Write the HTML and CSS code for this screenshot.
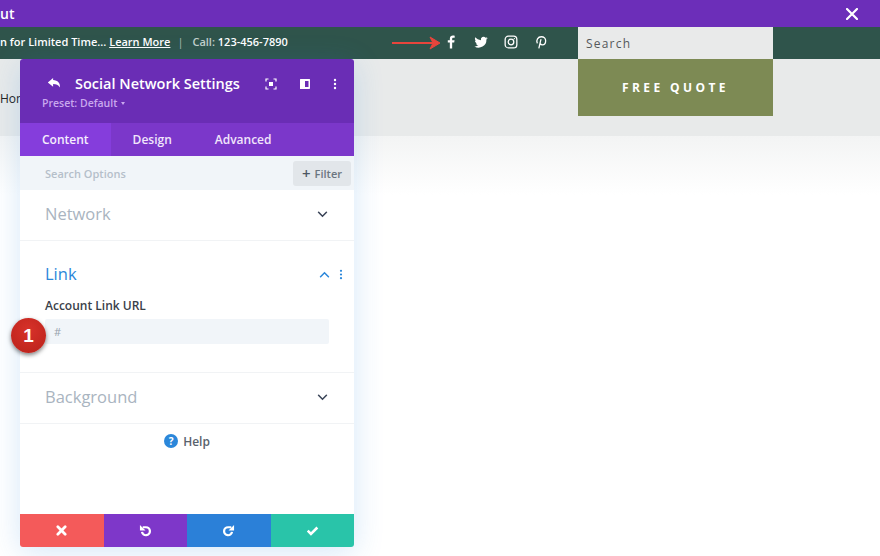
FILE: index.html
```html
<!DOCTYPE html>
<html lang="en">
<head>
<meta charset="utf-8">
<title>Social Network Settings</title>
<link rel="stylesheet" href="styles.css">
</head>
<body>
<div class="page">
  <div class="topbar"><span class="topbar-title">ut</span>
    <svg class="close" viewBox="0 0 12 12" width="12" height="12"><path d="M1 1l10 10M11 1L1 11" stroke="#fff" stroke-width="2.2" stroke-linecap="round"/></svg>
  </div>
  <div class="greenbar">
    <div class="promo">n for Limited Time... <u>Learn More</u><span class="sep">|</span><span class="call">Call:</span> 123-456-7890</div>
    <div class="arrow-wrap"><svg width="50" height="14" viewBox="0 0 50 14"><path d="M0 7H44" stroke="#e8453c" stroke-width="2"/><path d="M38 1l10 6-10 6 3-6z" fill="#e8453c" stroke="#e8453c" stroke-width="1"/></svg></div>
    <div class="socials">
      <svg viewBox="0 0 24 24" width="14" height="14"><path fill="#fff" d="M14 23V13h3.5l.6-4H14V6.800c0-1.200.5-2 2.100-2H18.300V1.200C17.800 1.100 16.600 1 15.300 1 12.200 1 10 2.900 10 6.300V9H6.500v4H10v10z"/></svg>
      <svg viewBox="0 0 24 24" width="14" height="14"><path fill="#fff" d="M23.500 5.200c-.8.400-1.700.6-2.700.8 1-.6 1.700-1.500 2.100-2.600-.9.500-1.900.9-3 1.100A4.700 4.700 0 0 0 11.900 8.800C8 8.600 4.500 6.700 2.200 3.900c-1.300 2.200-.6 4.900 1.500 6.300-.8 0-1.500-.2-2.100-.6 0 2.300 1.600 4.200 3.800 4.700-.7.200-1.400.2-2.100.1.600 1.900 2.300 3.200 4.400 3.300A9.500 9.500 0 0 1 .7 19.600 13.400 13.400 0 0 0 21.300 7.700c1-.7 1.700-1.500 2.200-2.500z"/></svg>
      <svg viewBox="0 0 24 24" width="14" height="14" fill="none" stroke="#fff" stroke-width="2.200"><rect x="2" y="2" width="20" height="20" rx="5.500"/><circle cx="12" cy="12" r="4.800"/><circle cx="17.800" cy="6.200" r="1.200" fill="#fff" stroke="none"/></svg>
      <svg viewBox="0 0 24 24" width="14" height="14"><path fill="none" stroke="#fff" stroke-width="2.200" stroke-linecap="round" d="M5.500 13.500C3.500 9 6.500 3 12.500 3c5 0 7.500 3.400 7.500 7 0 4.200-2.500 7-5.500 7-2 0-3-1.200-3.300-2M11.800 8l-3.300 14"/></svg>
    </div>
    <div class="searchbox">Search</div>
  </div>
  <div class="headerband">
    <div class="menu">Hom</div>
    <div class="quote">FREE QUOTE</div>
  </div>
  <div class="fade"></div>

  <section class="panel">
    <header class="panel-head">
      <div class="head-row">
        <svg class="back" viewBox="0 0 16 14" width="15" height="13"><path fill="#fff" d="M6.500 1L.8 5.800l5.700 4.700V7.600c3.400 0 5.600.7 7.300 3.600.6-4.700-2.300-7.700-7.300-8z"/></svg>
        <h1>Social Network Settings</h1>
        <svg class="hicon" viewBox="0 0 12 12" width="12" height="12"><path fill="none" stroke="#fff" stroke-width="1.200" d="M1 3.500V1h2.500M8.500 1H11v2.500M11 8.500V11H8.500M3.500 11H1V8.500"/><rect x="4" y="4" width="4" height="4" fill="#fff"/></svg>
        <svg class="hicon split" viewBox="0 0 12 12" width="12" height="12"><path fill="#fff" fill-rule="evenodd" d="M1.500 1h9A.8.800 0 0 1 11 1.800v8.400a.8.800 0 0 1-.8.800h-9A.8.800 0 0 1 1 10.200V1.800A.8.800 0 0 1 1.500 1zM6 3v6h3.500V3z"/></svg>
        <svg class="hicon dots" viewBox="0 0 4 12" width="4" height="12"><circle cx="2" cy="2" r="1.200" fill="#fff"/><circle cx="2" cy="6" r="1.200" fill="#fff"/><circle cx="2" cy="10" r="1.200" fill="#fff"/></svg>
      </div>
      <div class="preset">Preset: Default <span class="caret"></span></div>
    </header>
    <nav class="tabs">
      <div class="tab active">Content</div>
      <div class="tab">Design</div>
      <div class="tab">Advanced</div>
    </nav>
    <div class="searchrow">
      <span class="search-ph">Search Options</span>
      <div class="filter"><span class="plus">+</span> Filter</div>
    </div>
    <div class="group closed">
      <span class="group-title">Network</span>
      <svg class="chev" viewBox="0 0 12 8" width="11" height="7"><path d="M1.500 1.500L6 6l4.500-4.500" fill="none" stroke="#3b4558" stroke-width="1.800" stroke-linecap="round"/></svg>
    </div>
    <div class="group open">
      <div class="open-head">
        <span class="group-title link">Link</span>
        <svg class="chev up" viewBox="0 0 12 8" width="11" height="7"><path d="M1.500 6.500L6 2l4.500 4.500" fill="none" stroke="#2b87da" stroke-width="1.800" stroke-linecap="round"/></svg>
        <svg class="more" viewBox="0 0 4 12" width="4" height="11"><circle cx="2" cy="2" r="1.200" fill="#2b87da"/><circle cx="2" cy="6" r="1.200" fill="#2b87da"/><circle cx="2" cy="10" r="1.200" fill="#2b87da"/></svg>
      </div>
      <label class="field-label">Account Link URL</label>
      <div class="field">#</div>
    </div>
    <div class="group closed">
      <span class="group-title">Background</span>
      <svg class="chev" viewBox="0 0 12 8" width="11" height="7"><path d="M1.500 1.500L6 6l4.500-4.500" fill="none" stroke="#3b4558" stroke-width="1.800" stroke-linecap="round"/></svg>
    </div>
    <div class="help">
      <span class="help-icon">?</span>
      <span>Help</span>
    </div>
    <footer class="actions">
      <div class="act red"><svg viewBox="0 0 12 12" width="11" height="11"><path d="M2 2l8 8M10 2l-8 8" stroke="#fff" stroke-width="3" stroke-linecap="round"/></svg></div>
      <div class="act purple"><svg viewBox="0 0 14 14" width="13" height="13"><path fill="none" stroke="#fff" stroke-width="2.400" d="M4 3.500h3.500a4.300 4.300 0 1 1-4.300 5"/><path fill="#fff" d="M1 1v6h6z"/></svg></div>
      <div class="act blue"><svg viewBox="0 0 14 14" width="13" height="13"><path fill="none" stroke="#fff" stroke-width="2.400" d="M10 3.500H6.500a4.300 4.300 0 1 0 4.300 5"/><path fill="#fff" d="M13 1v6H7z"/></svg></div>
      <div class="act green"><svg viewBox="0 0 14 12" width="13" height="11"><path d="M1.800 6.200l3.500 3.500 7-7" fill="none" stroke="#fff" stroke-width="2.800"/></svg></div>
    </footer>
  </section>

  <div class="badge">1</div>
</div>
</body>
</html>
```

FILE: styles.css
```css
* { box-sizing: border-box; }
html, body { margin: 0; padding: 0; }
body { width: 880px; height: 556px; overflow: hidden; background: #fff; font-family: "Open Sans", "Noto Sans", sans-serif; }
.page { position: relative; width: 880px; height: 556px; overflow: hidden; }

.topbar { height: 27px; background: #6c2eb9; display: flex; align-items: center; justify-content: space-between; padding-right: 22px; }
.topbar-title { color: #fff; font-size: 14px; font-weight: 600; }
.close { display: block; }

.greenbar { height: 32px; background: #2f544b; display: flex; align-items: center; position: relative; }
.promo { width: 392px; color: #fff; font-size: 11px; font-weight: 600; white-space: nowrap; padding-bottom: 4px; flex: none; }
.sep { color: #a9bab5; margin: 0 9px 0 7px; font-weight: 400; }
.call { color: #c3d0cc; }
.arrow-wrap { width: 50px; flex: none; display: flex; }
.socials { display: flex; gap: 16px; align-items: center; flex: none; width: 136px; padding-left: 2px; padding-bottom: 2px; }
.searchbox { width: 195px; height: 32px; background: #e9eaea; color: #55585a; font-size: 12px; letter-spacing: 1.2px; padding: 9px 8px 0; line-height: 16px; flex: none; }

.headerband { height: 77px; background: #e8eaea; display: flex; position: relative; }
.menu { width: 578px; flex: none; color: #222; font-size: 12px; padding-top: 31px; }
.quote { width: 195px; height: 57px; background: #7d8a54; color: #fff; font-size: 12px; font-weight: 700; letter-spacing: 3.400px; display: flex; align-items: center; justify-content: center; }
.fade { height: 59px; background: linear-gradient(#f3f4f4, #fff); }

.panel { position: absolute; left: 20px; top: 59px; width: 334px; height: 488px; background: #fff; border-radius: 3px; box-shadow: 0 5px 30px rgba(43,135,218,.2); display: flex; flex-direction: column; overflow: hidden; }
.panel-head { height: 64px; background: #6a2db5; flex: none; padding: 14px 0 0 27px; }
.head-row { display: flex; align-items: center; height: 21px; }
.back { flex: none; }
.head-row h1 { margin: 0 0 0 13px; width: 190px; flex: none; font-size: 14.500px; font-weight: 600; color: #fff; white-space: nowrap; line-height: 21px; }
.hicon { flex: none; margin-left: 0; }
.split { margin-left: 22px; }
.dots { margin-left: 22px; }
.preset { font-size: 10.500px; font-weight: 600; color: #c9a8ee; margin: 2px 0 0 -5px; line-height: 15px; }
.caret { display: inline-block; width: 0; height: 0; border-left: 2.500px solid transparent; border-right: 2.500px solid transparent; border-top: 3px solid #c9a8ee; vertical-align: 2px; margin-left: 1px; }

.tabs { height: 33px; flex: none; background: #7b37ca; display: flex; }
.tab { color: #f1e6fb; font-size: 12px; font-weight: 600; line-height: 33px; padding: 0 22px 0 0; margin-left: 22px; }
.tab.active { background: #853ddc; color: #f5eefc; padding: 0 22px; margin-left: 0; }
.tab:nth-child(2) { margin-left: 22px; padding-right: 0; }
.tab:nth-child(3) { margin-left: 43px; }

.searchrow { height: 34px; flex: none; background: #f1f5f9; display: flex; align-items: center; justify-content: space-between; padding: 0 3px 0 25px; }
.search-ph { font-size: 11px; font-weight: 600; color: #b5bfca; }
.filter { width: 58px; height: 25px; background: #e2e6ea; border-radius: 3px; color: #6b7580; font-size: 11px; font-weight: 600; display: flex; align-items: center; justify-content: center; gap: 4px; }
.plus { font-size: 15px; line-height: 15px; font-weight: 600; color: #4d5763; }

.group { border-bottom: 1px solid #f1f3f5; flex: none; }
.closed { height: 51px; display: flex; align-items: center; justify-content: space-between; padding: 0 26px 2px 25px; }
.group-title { font-size: 16.500px; color: #a9b4c0; line-height: 24px; }
.group-title.link { color: #2b87da; }
.chev { display: block; }
.open { height: 132px; padding: 21px 25px 0; }
.open-head { display: flex; align-items: center; height: 24px; position: relative; }
.open-head .group-title { flex: 1; }
.up { margin-right: -1px; }
.more { position: absolute; right: -14px; top: 7px; }
.field-label { display: block; margin-top: 11px; font-size: 12px; font-weight: 600; color: #3a4149; line-height: 17px; }
.field { margin-top: 5px; width: 284px; height: 25px; background: #f1f5f9; border-radius: 2px; color: #98a2ad; font-size: 11px; line-height: 25px; padding-left: 9px; }

.closed:nth-of-type(n) { flex: none; }
.help { display: flex; align-items: center; justify-content: center; gap: 5px; height: 34px; flex: none; font-size: 12px; font-weight: 600; color: #59626c; }
.help-icon { width: 14px; height: 14px; border-radius: 50%; background: #2b87da; color: #fff; font-size: 10px; font-weight: 700; line-height: 14px; text-align: center; }

.actions { margin-top: auto; height: 33px; flex: none; display: flex; }
.act { flex: 1; display: flex; align-items: center; justify-content: center; }
.red { background: #f45a5a; }
.purple { background: #7e37c9; }
.blue { background: #2b80d8; }
.green { background: #29c4a9; }

.badge { position: absolute; left: 11px; top: 318px; width: 35px; height: 35px; border-radius: 50%; background: radial-gradient(circle at 50% 35%, #d8322a, #b8211a); color: #fff; font-family: "Liberation Sans", sans-serif; font-size: 19px; font-weight: 700; line-height: 35px; text-align: center; box-shadow: 0 2px 4px rgba(0,0,0,.5); }
```
